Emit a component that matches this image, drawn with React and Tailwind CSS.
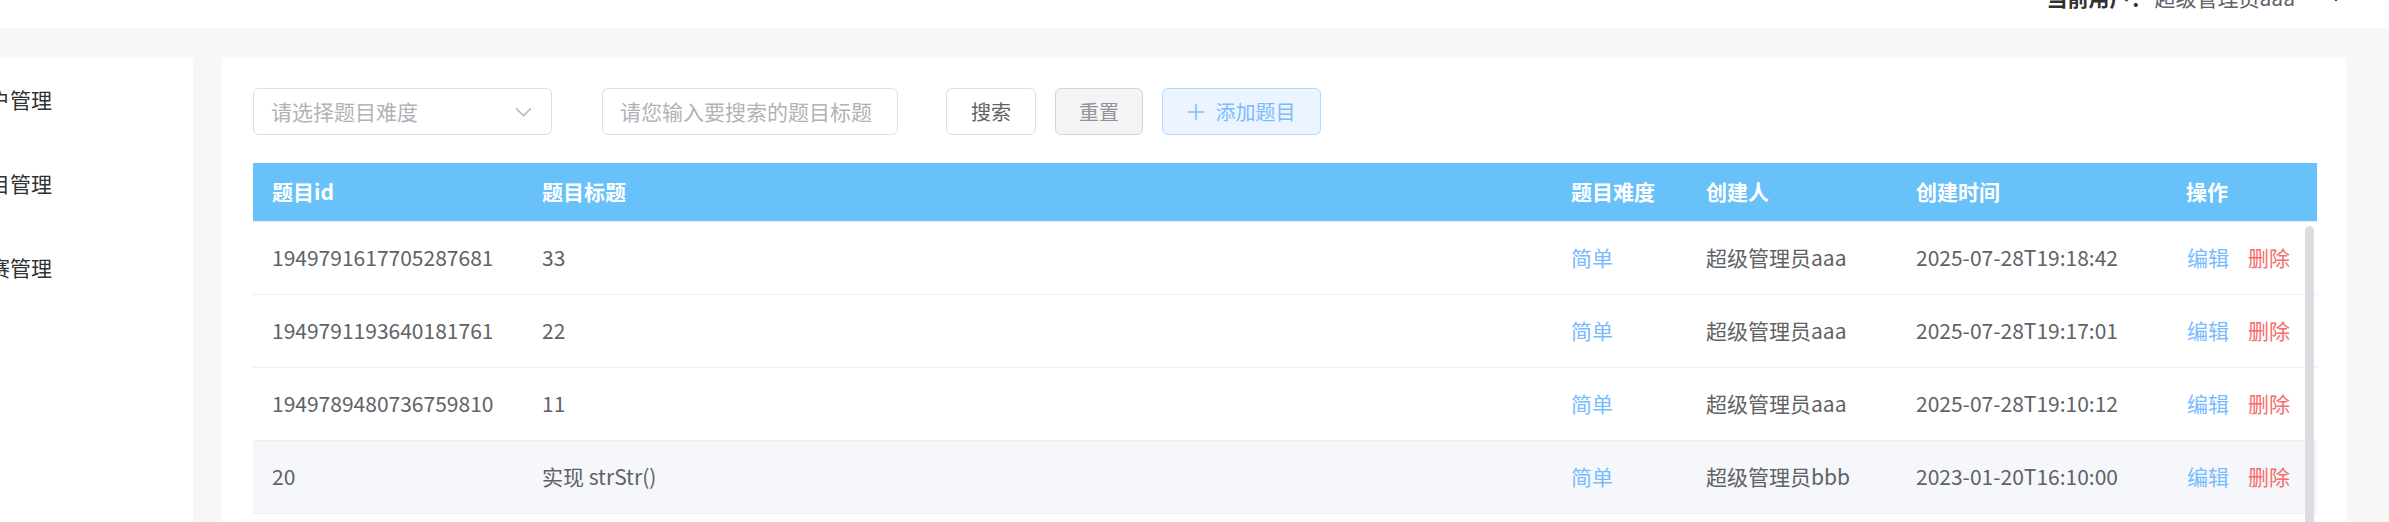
import React from 'react';

const rows = [
  { id: '1949791617705287681', title: '33', level: '简单', creator: '超级管理员aaa', time: '2025-07-28T19:18:42' },
  { id: '1949791193640181761', title: '22', level: '简单', creator: '超级管理员aaa', time: '2025-07-28T19:17:01' },
  { id: '1949789480736759810', title: '11', level: '简单', creator: '超级管理员aaa', time: '2025-07-28T19:10:12' },
  { id: '20', title: '实现 strStr()', level: '简单', creator: '超级管理员bbb', time: '2023-01-20T16:10:00', hover: true },
  { id: '19', title: '两数之和', level: '简单', creator: '超级管理员bbb', time: '2023-01-20T16:05:00' },
];

const cols = 'grid grid-cols-[270px_1029px_135px_210px_270px_150px]';

const App = () => {
  return (
    <div className="w-[2389px] h-[522px] overflow-hidden bg-[#f7f7f7] font-['Noto_Sans_CJK_SC','Noto_Sans',sans-serif]">
      {/* Top bar */}
      <header className="h-[28px] bg-white overflow-hidden flex justify-end pr-[47px]">
        <div className="-mt-[13px] h-[21px] flex items-center text-[21px] leading-[21px]">
          <span className="font-bold text-[#303133]">当前用户：</span>
          <span className="ml-[3px] text-[#606266]">超级管理员aaa</span>
          <svg className="ml-[35px]" width="12" height="12" viewBox="0 0 12 12" fill="none">
            <path d="M1.5 3.5 6 8l4.5-4.5" stroke="#303133" strokeWidth="2.4" strokeLinecap="round" strokeLinejoin="round" />
          </svg>
        </div>
      </header>

      <div className="flex pt-[30px] gap-[29px]">
        {/* Sidebar */}
        <aside className="w-[193px] h-[464px] bg-white overflow-hidden">
          {['用户管理', '题目管理', '竞赛管理'].map((t) => (
            <div key={t} className="h-[84px] flex items-center">
              <span className="-ml-[32px] whitespace-nowrap text-[21px] text-[#303133]">{t}</span>
            </div>
          ))}
        </aside>

        {/* Main card */}
        <main className="w-[2124px] h-[464px] bg-white pl-[31px] pr-[29px] pt-[30px]">
          {/* Toolbar */}
          <div className="flex items-center h-[47px]">
            <div className="w-[299px] h-[47px] border border-[#dcdfe6] rounded-[6px] flex items-center justify-between pl-[17px] pr-[19px]">
              <span className="text-[21px] text-[#b1b3b8]">请选择题目难度</span>
              <svg width="17" height="10" viewBox="0 0 17 10" fill="none">
                <path d="M1 1.2 8.5 8.7 16 1.2" stroke="#b1b3b8" strokeWidth="1.4" />
              </svg>
            </div>
            <div className="ml-[50px] w-[296px] h-[47px] border border-[#dcdfe6] rounded-[6px] flex items-center pl-[17px]">
              <span className="text-[21px] text-[#b1b3b8] whitespace-nowrap">请您输入要搜索的题目标题</span>
            </div>
            <button className="ml-[48px] w-[90px] h-[47px] border border-[#dcdfe6] rounded-[6px] bg-white text-[20px] text-[#606266] flex items-center justify-center">
              搜索
            </button>
            <button className="ml-[19px] w-[88px] h-[47px] border border-[#d3d4d6] rounded-[6px] bg-[#f4f4f5] text-[20px] text-[#909399] flex items-center justify-center">
              重置
            </button>
            <button className="ml-[19px] w-[159px] h-[47px] border border-[#b3d8ff] rounded-[6px] bg-[#ecf5ff] text-[20px] text-[#79bbff] flex items-center justify-center gap-[12px]">
              <svg width="16" height="16" viewBox="0 0 16 16" fill="none">
                <path d="M8 0v16M0 8h16" stroke="#79bbff" strokeWidth="1.5" />
              </svg>
              <span>添加题目</span>
            </button>
          </div>

          {/* Table */}
          <div className="mt-[28px] w-[2064px]">
            <div className={`${cols} h-[59px] bg-[#68c1f8] border-b border-[#ebeef5] items-center text-[21px] font-bold text-white`}>
              <div className="pl-[19px]">题目id</div>
              <div className="pl-[19px]">题目标题</div>
              <div className="pl-[19px]">题目难度</div>
              <div className="pl-[19px]">创建人</div>
              <div className="pl-[19px]">创建时间</div>
              <div className="pl-[19px]">操作</div>
            </div>
            <div className="relative">
              {rows.map((r) => (
                <div
                  key={r.id}
                  className={`${cols} h-[73px] border-b border-[#ebeef5] items-center text-[21px] text-[#606266] ${r.hover ? 'bg-[#f5f7fa]' : 'bg-white'}`}
                >
                  <div className="pl-[19px]">{r.id}</div>
                  <div className="pl-[19px]">{r.title}</div>
                  <div className="pl-[19px] text-[#79bbff]">{r.level}</div>
                  <div className="pl-[19px]">{r.creator}</div>
                  <div className="pl-[19px]">{r.time}</div>
                  <div className="pl-[20px] flex gap-[19px]">
                    <span className="text-[#79bbff]">编辑</span>
                    <span className="text-[#f56c6c]">删除</span>
                  </div>
                </div>
              ))}
              <div className="absolute right-[3px] top-[4px] w-[9px] h-[400px] rounded-full bg-[#dcdde0]" />
            </div>
          </div>
        </main>
      </div>
    </div>
  );
};

export default App;
